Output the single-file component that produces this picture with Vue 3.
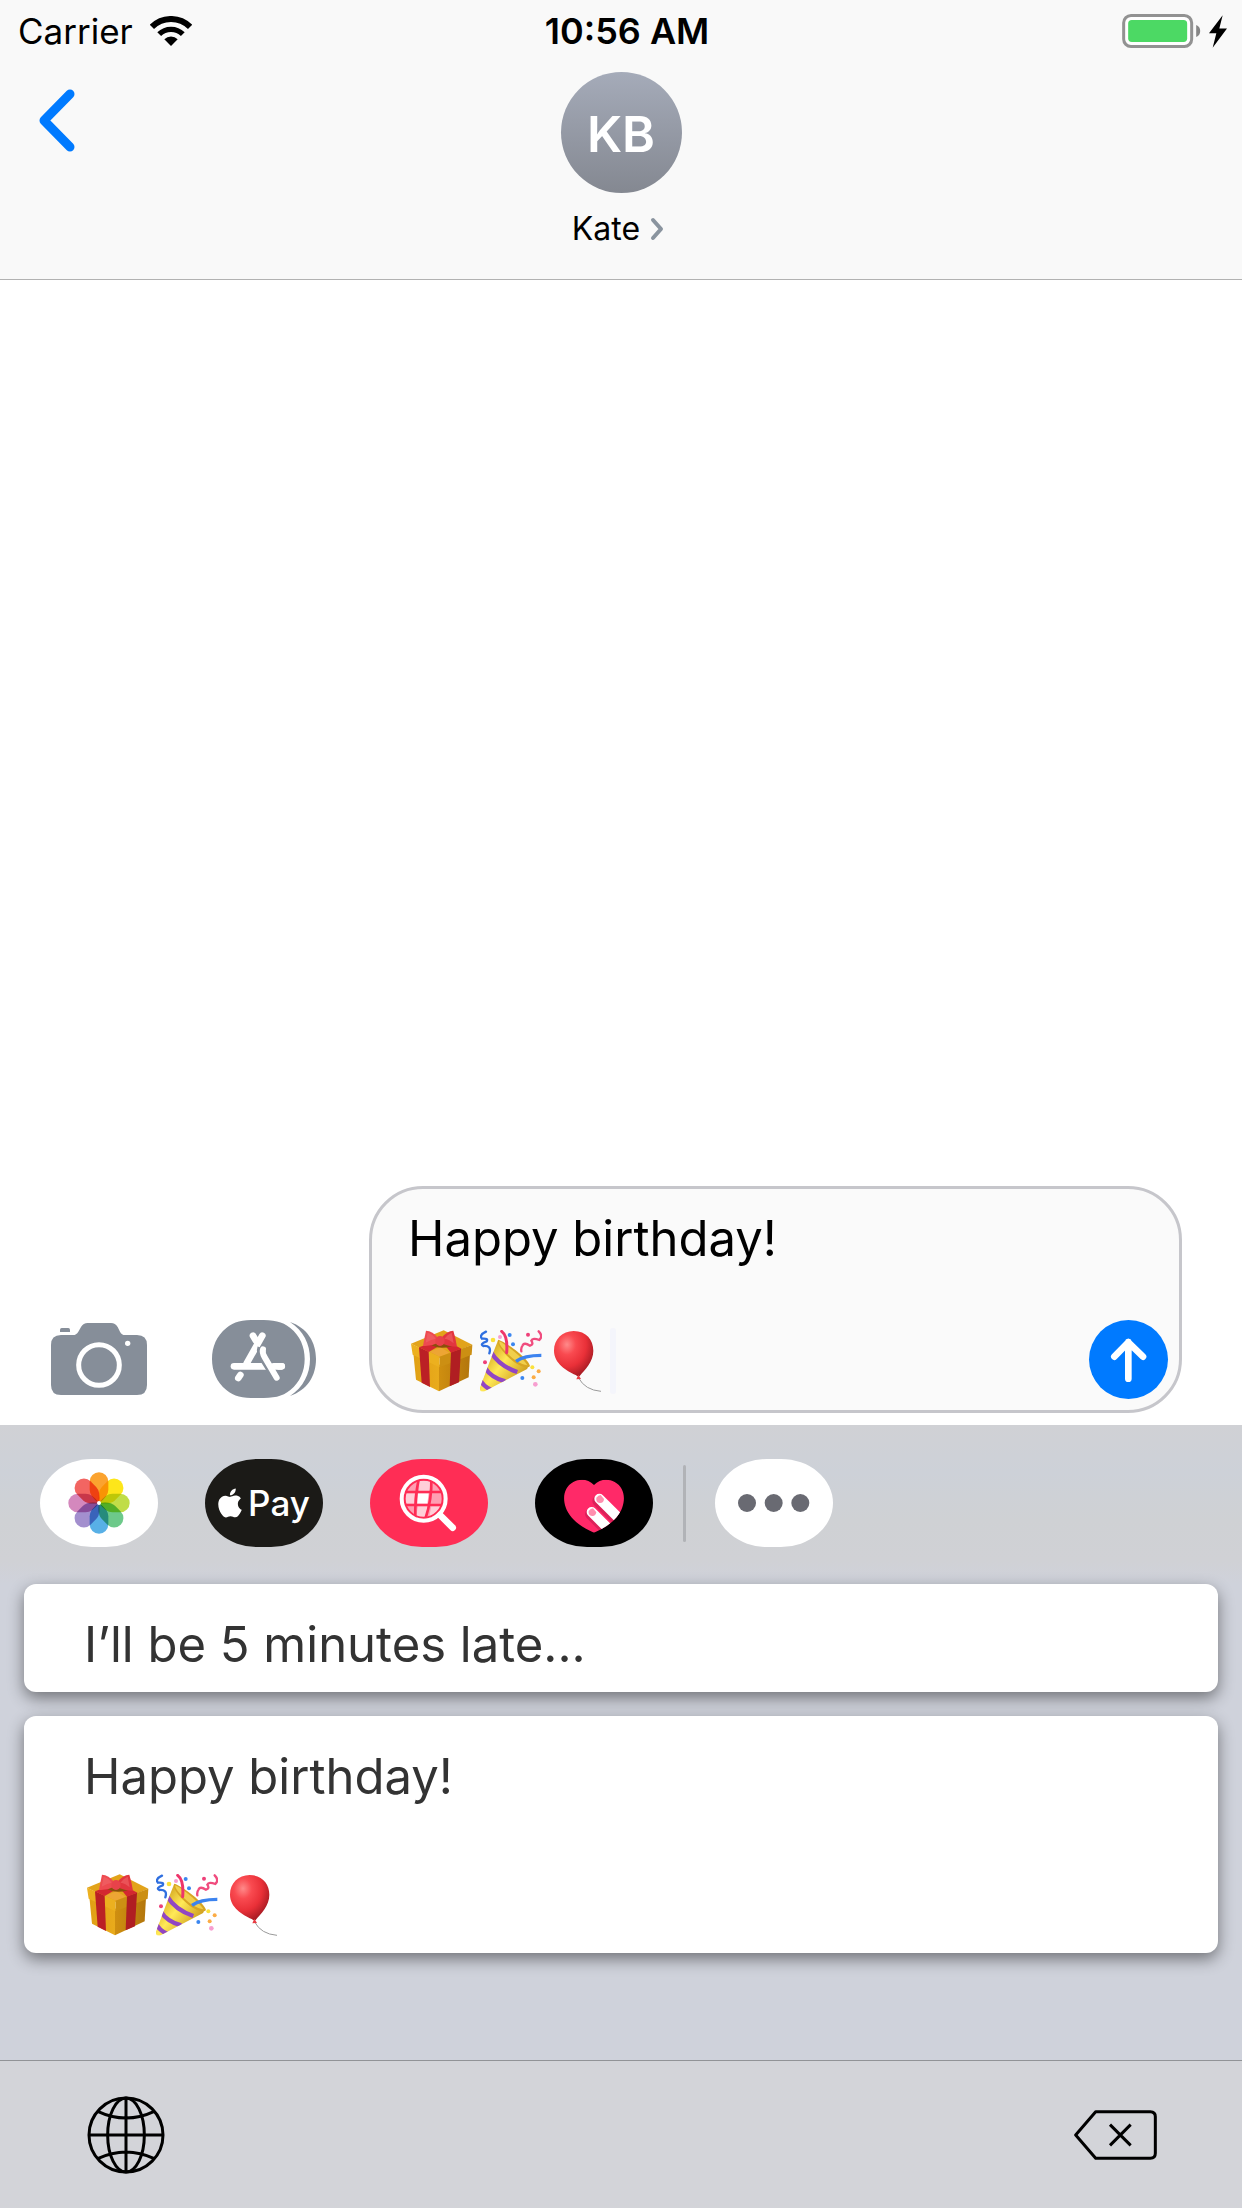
<script setup>
import { ref } from 'vue'

const draft = ref('Happy birthday!')
const phrases = [
  { text: 'I’ll be 5 minutes late...', emojis: [] },
  { text: 'Happy birthday!', emojis: ['gift', 'party', 'balloon'] },
]
const draftEmojis = ['gift', 'party', 'balloon']

const petals = ['#fba32f', '#fde61a', '#c0dd48', '#6dc98a', '#58b0e6', '#a38fce', '#d488bd', '#f26562']
</script>

<template>
  <div class="screen">
    <svg class="sprite" aria-hidden="true">
      <defs>
        <linearGradient id="boxL" x1="0" y1="0" x2="1" y2="0">
          <stop offset="0" stop-color="#e0a014" /><stop offset="1" stop-color="#e9ab1c" />
        </linearGradient>
        <linearGradient id="boxR" x1="0" y1="0" x2="1" y2="0">
          <stop offset="0" stop-color="#cf8f10" /><stop offset="1" stop-color="#b3760c" />
        </linearGradient>
        <linearGradient id="cone" x1="0" y1="0.3" x2="0.8" y2="0.9">
          <stop offset="0" stop-color="#c9920f" /><stop offset="0.45" stop-color="#ffe957" /><stop offset="1" stop-color="#c28b10" />
        </linearGradient>
        <radialGradient id="rubber" cx="0.33" cy="0.3" r="0.75">
          <stop offset="0" stop-color="#ff8a8a" /><stop offset="0.3" stop-color="#f94a50" />
          <stop offset="0.65" stop-color="#e93038" /><stop offset="1" stop-color="#a51a22" />
        </radialGradient>
        <clipPath id="coneClip"><path d="M55 29 Q42 60 0 172 Q-3 188 14 184 L140 118 Q150 108 132 92 Z" /></clipPath>
        <clipPath id="heartClip"><path d="M177 78 C160 60 135 58 115 69 C87 84 82 116 92 145 C103 178 138 205 177 221 C216 205 251 178 262 145 C272 116 267 84 239 69 C219 58 194 60 177 78 Z" /></clipPath>
      </defs>
      <symbol id="gift" viewBox="0 0 186 186">
        <path fill="url(#boxL)" d="M7 68 L84 104 V184 L15 149 Z" />
        <path fill="url(#boxR)" d="M84 104 L177 70 L173 142 L84 184 Z" />
        <path fill="#e2a31a" d="M0 41 L98 1 L184 44 L86 84 Z" />
        <path fill="#eda534" d="M55 65 L88 52 L116 68 L86 80 Z" />
        <path fill="#ecb01f" d="M0 41 L86 80 V112 L5 74 Z" />
        <path fill="#cc8f13" d="M86 80 L184 44 L182 74 L86 112 Z" />
        <path fill="#bb2025" d="M24 52 L53 65 L57 171 L32 158 Z" />
        <path fill="#b01e22" d="M120 67 L150 56 L144 157 L116 169 Z" />
        <path fill="#d32730" d="M24 52 L66 37 L85 47 L53 66 Z M103 47 L118 38 L151 56 L120 68 Z" />
        <path fill="#8b4f0b" d="M62 46 Q88 60 124 48 L112 36 H68 Z" />
        <path fill="#ee4a50" d="M82 25 Q65 2 45 2 Q40 24 36 48 Q58 50 82 38 Z" />
        <path fill="#e2363f" d="M90 25 Q108 2 127 2 Q134 24 138 50 Q112 50 90 38 Z" />
        <path fill="#f06a6b" d="M50 8 Q66 12 74 26 Q62 28 44 38 Z M122 8 Q108 14 100 26 Q116 28 128 40 Z" opacity="0.55" />
        <ellipse cx="87" cy="33" rx="14" ry="15" fill="#e8424a" />
      </symbol>
      <symbol id="party" viewBox="0 0 186 186">
        <g clip-path="url(#coneClip)">
          <path fill="url(#cone)" d="M50 25 H160 V186 H-5 Z" />
          <g fill="none" stroke="#9146c4" stroke-width="13">
            <path d="M34 68 Q58 108 112 126" />
            <path d="M14 112 Q34 144 76 154" />
            <path d="M0 148 Q8 168 34 180" />
          </g>
        </g>
        <path fill="#d7a523" d="M55 29 C78 36 148 88 150 108 C144 118 112 108 88 84 C64 62 48 38 55 29 Z" />
        <path fill="#f1cf4c" d="M58 34 C76 42 130 84 142 106 C122 104 100 88 84 72 C66 54 56 42 58 34 Z" />
        <g fill="none" stroke-linecap="round">
          <path stroke="#ee356b" stroke-width="9" d="M65 4 Q84 18 80 68" />
          <path stroke="#3c83ef" stroke-width="10" d="M108 94 Q132 76 184 76" stroke-linecap="butt" />
          <path stroke="#2f6fe0" stroke-width="7" d="M18 5 Q-4 16 6 26 Q26 24 20 34 Q-2 42 10 48 Q36 46 28 70" />
          <path stroke="#f04c7e" stroke-width="7" d="M176 4 Q190 18 178 30 Q158 22 154 32 Q162 44 150 47 Q132 36 128 46 Q122 54 124 64" />
        </g>
        <g fill="#3a86f0">
          <circle cx="89" cy="15" r="6" /><circle cx="99" cy="43" r="6" /><circle cx="127" cy="144" r="6" />
        </g>
        <g fill="#ee4079"><circle cx="144" cy="14" r="6" /><circle cx="15" cy="97" r="6" /></g>
        <g fill="#fbe13a"><circle cx="39" cy="30" r="7" /><circle cx="157" cy="112" r="6" /></g>
        <g fill="#f79fd0"><circle cx="60" cy="21" r="6" /><circle cx="166" cy="163" r="7" /></g>
        <g fill="#fbac45"><circle cx="176" cy="124" r="6" /><circle cx="161" cy="142" r="6" /></g>
      </symbol>
      <symbol id="balloon" viewBox="0 0 186 186">
        <path fill="none" stroke="#9a9a9a" stroke-width="3" d="M89 144 Q108 180 156 184" />
        <path fill="url(#rubber)" d="M74 3 C112 3 133 30 133 62 C133 96 108 118 92 138 Q86 140 80 135 C52 122 15 100 15 62 C15 28 40 3 74 3 Z" />
        <path fill="#e83b42" d="M88 134 L96 147 L82 148 Z" />
      </symbol>
    </svg>

    <header class="header">
      <div class="status">
        <div class="carrier">
          <span>Carrier</span>
          <svg class="wifi" viewBox="0 0 126 90" aria-label="Wi-Fi">
            <g fill="none" stroke="#000">
              <path stroke-width="18" d="M5.700 32.700 A81 81 0 0 1 120.300 32.700" />
              <path stroke-width="16" d="M27.600 54.600 A50 50 0 0 1 98.400 54.600" />
            </g>
            <path d="M43 70 A28 28 0 0 1 83 70 L63 90 Z" />
          </svg>
        </div>
        <time class="clock">10:56 AM</time>
        <div class="power">
          <svg class="battery" viewBox="0 0 236 102" aria-label="Battery charging">
            <rect x="4.500" y="4.500" width="204" height="93" rx="22" fill="#fff" stroke="#929292" stroke-width="9" />
            <rect x="18" y="18" width="177" height="66" rx="11" fill="#4cd964" />
            <path fill="#868686" d="M222 33 Q234 38 234 51 Q234 64 222 69 Z" />
          </svg>
          <svg class="bolt" viewBox="0 0 54 98" aria-hidden="true">
            <path d="M41 0 L0 54 H22 L11 98 L54 40 H31 Z" />
          </svg>
        </div>
      </div>

      <div class="nav">
        <button class="back" type="button" aria-label="Back">
          <svg viewBox="0 0 37 63" aria-hidden="true">
            <path d="M32 5 L6 31.500 L32 58" fill="none" stroke="#007aff" stroke-width="9" stroke-linecap="round" stroke-linejoin="round" />
          </svg>
        </button>
        <button class="contact" type="button">
          <span class="avatar">KB</span>
          <span class="name">
            Kate
            <svg viewBox="0 0 14 24" aria-hidden="true">
              <path d="M3 3 L11 12 L3 21" fill="none" stroke="#8a949f" stroke-width="4" stroke-linecap="round" stroke-linejoin="round" />
            </svg>
          </span>
        </button>
      </div>
    </header>

    <main class="thread"></main>

    <form class="composer" @submit.prevent>
      <button class="tool camera" type="button" aria-label="Camera">
        <svg viewBox="0 0 288 216" aria-hidden="true">
          <path fill="#868e99" d="M30 36 H66 Q76 36 82 26 L90 12 Q97 0 110 0 H180 Q193 0 200 12 L207 26 Q212 36 222 36 H258 Q288 36 288 66 V186 Q288 216 258 216 H30 Q0 216 0 186 V66 Q0 36 30 36 Z" />
          <path fill="#868e99" d="M27 27 V20 Q27 15 32 15 H52 Q57 15 57 20 V27 Z" />
          <circle cx="144" cy="126" r="61" fill="none" stroke="#fff" stroke-width="15" />
          <circle cx="230" cy="61" r="8" fill="#fff" />
        </svg>
      </button>
      <button class="tool store" type="button" aria-label="Apps">
        <svg viewBox="0 0 312 234" aria-hidden="true">
          <path fill="#868e99" d="M139 0 C185 0 210 3 235 24 C264 48 278 80 278 117 C278 154 264 186 235 210 C210 231 185 234 139 234 C93 234 68 231 43 210 C14 186 0 154 0 117 C0 80 14 48 43 24 C68 3 93 0 139 0 Z" />
          <path fill="#868e99" d="M234 6 C286 24 312 66 312 117 C312 168 286 210 234 228 C274 202 294 162 294 117 C294 72 274 32 234 6 Z" />
          <g fill="none" stroke="#fff" stroke-width="20" stroke-linecap="round">
            <path d="M151 47 L104 130" />
            <path d="M123 47 L132 62" />
            <path d="M66 139 H209" />
            <path d="M85 165 L79 174" />
          </g>
          <path d="M151 84 Q147 96 156 112 L195 174" fill="none" stroke="#868e99" stroke-width="30" />
          <path d="M153 88 Q150 98 158 112 L194 173" fill="none" stroke="#fff" stroke-width="18" stroke-linecap="round" />
          <path d="M185 139 H209" stroke="#fff" stroke-width="20" stroke-linecap="round" />
        </svg>
      </button>
      <div class="field">
        <div class="field-body">
          <textarea v-model="draft" rows="1" aria-label="Message"></textarea>
          <div class="emojis">
            <svg v-for="name in draftEmojis" :key="name" role="img" :aria-label="name"><use :href="'#' + name" /></svg>
            <span class="caret"></span>
          </div>
        </div>
        <button class="send" type="submit" aria-label="Send">
          <svg viewBox="0 0 237 237" aria-hidden="true">
            <path d="M118 176 V66 M76 110 L118 67 L162 110" fill="none" stroke="#fff" stroke-width="20" stroke-linecap="round" stroke-linejoin="round" />
          </svg>
        </button>
      </div>
    </form>

    <section class="keyboard">
      <nav class="apps">
        <button class="app white" type="button" aria-label="Photos">
          <svg class="flower" viewBox="0 0 354 264" aria-hidden="true">
            <g transform="translate(177 132)">
              <path
                v-for="(color, i) in petals"
                :key="color"
                class="petal"
                :fill="color"
                :transform="`rotate(${i * 45})`"
                d="M0 0 Q-28 -20 -28 -40 V-64 A28 28 0 0 1 28 -64 V-40 Q28 -20 0 0 Z"
              />
              <circle r="6" fill="#fff" />
            </g>
          </svg>
        </button>
        <button class="app pay" type="button">
          <svg class="apple" viewBox="2 0 20 24" aria-label="Apple">
            <path fill="#fff" d="M12.152 6.896c-.948 0-2.415-1.078-3.96-1.040-2.040.027-3.910 1.183-4.961 3.014-2.117 3.675-.546 9.103 1.519 12.090 1.013 1.454 2.208 3.090 3.792 3.039 1.520-.065 2.090-.987 3.935-.987 1.831 0 2.350.987 3.960.948 1.637-.026 2.676-1.480 3.676-2.948 1.156-1.688 1.636-3.325 1.662-3.415-.039-.013-3.182-1.221-3.220-4.857-.026-3.040 2.480-4.494 2.597-4.559-1.429-2.090-3.623-2.324-4.390-2.376-2-.156-3.675 1.090-4.610 1.090zM15.530 3.830c.843-1.012 1.400-2.427 1.245-3.830-1.207.052-2.662.805-3.532 1.818-.780.896-1.454 2.338-1.273 3.714 1.338.104 2.715-.688 3.559-1.701" />
          </svg>
          <span>Pay</span>
        </button>
        <button class="app images" type="button" aria-label="Images">
          <svg viewBox="0 0 354 264" aria-hidden="true">
            <circle cx="161" cy="119" r="60" fill="#ff9fb2" />
            <path fill="#ffcfd8" d="M148 66 L182 64 L178 98 H147 Z M104 103 H134 L132 134 H104 Z M144 142 H174 L166 178 L138 172 Z M184 142 H214 L200 162 L178 172 Z" />
            <path fill="#fff" d="M144 103 H176 L172 134 H142 Z" />
            <g fill="none" stroke="#ff2d55" stroke-width="8">
              <path d="M104 99 H220 M102 138 H220" />
              <path d="M146 60 Q134 120 136 180 M184 62 Q186 120 166 180" />
              <circle cx="161" cy="119" r="57" stroke-width="6" />
            </g>
            <circle cx="161" cy="119" r="66" fill="none" stroke="#fff" stroke-width="12" />
            <path d="M210 168 L248 206" stroke="#fff" stroke-width="20" stroke-linecap="round" />
          </svg>
        </button>
        <button class="app touch" type="button" aria-label="Digital Touch">
          <svg viewBox="0 0 354 264" aria-hidden="true">
            <g clip-path="url(#heartClip)">
              <rect width="354" height="264" fill="#ff2968" />
              <g stroke-linecap="round" fill="none">
                <path d="M189 126 L268 205 M167 165 L240 238" stroke="#c41c50" stroke-width="34" opacity="0.6" />
                <path d="M193 119 L272 198 M170 159 L244 233" stroke="#fff" stroke-width="30" />
              </g>
              <g fill="#ff8fae">
                <path d="M184 116 Q190 108 197 108 L207 120 Q206 133 194 132 Q182 130 184 116 Z" />
                <path d="M161 156 Q167 148 174 148 L184 160 Q182 172 171 171 Q159 169 161 156 Z" />
              </g>
            </g>
          </svg>
        </button>
        <span class="divider"></span>
        <button class="app white" type="button" aria-label="More">
          <svg viewBox="0 0 354 264" aria-hidden="true">
            <g fill="#696a72"><circle cx="96" cy="132" r="27" /><circle cx="176" cy="132" r="27" /><circle cx="256" cy="132" r="27" /></g>
          </svg>
        </button>
      </nav>

      <div class="phrases">
        <button v-for="phrase in phrases" :key="phrase.text" class="phrase" type="button">
          <span>{{ phrase.text }}</span>
          <span v-if="phrase.emojis.length" class="emojis">
            <svg v-for="name in phrase.emojis" :key="name" role="img" :aria-label="name"><use :href="'#' + name" /></svg>
          </span>
        </button>
      </div>

      <footer class="bar">
        <button class="key globe" type="button" aria-label="Next keyboard">
          <svg viewBox="0 0 234 234" aria-hidden="true">
            <g fill="none" stroke="#000" stroke-width="9">
              <circle cx="117" cy="117" r="111" />
              <ellipse cx="117" cy="117" rx="55" ry="111" />
              <path d="M117 4 V230 M6 117 H228 M32 46 Q117 86 202 46 M32 188 Q117 148 202 188" />
            </g>
          </svg>
        </button>
        <button class="key delete" type="button" aria-label="Delete">
          <svg viewBox="0 0 249 150" aria-hidden="true">
            <g fill="none" stroke="#000" stroke-width="9">
              <path stroke-linejoin="round" d="M65 5 H229 Q244 5 244 20 V130 Q244 145 229 145 H65 L5 75 Z" />
              <path d="M108 44 L170 106 M170 44 L108 106" />
            </g>
          </svg>
        </button>
      </footer>
    </section>
  </div>
</template>

<style>
body {
  margin: 0;
}
</style>

<style scoped>
.screen {
  display: flex;
  flex-direction: column;
  min-height: 100vh;
  background: #fff;
  color: #000;
  font-family: Inter, "Liberation Sans", sans-serif;
}
.sprite {
  position: absolute;
  width: 0;
  height: 0;
}
svg {
  display: block;
  flex: none;
}
button {
  padding: 0;
  border: 0;
  background: none;
  color: inherit;
  font: inherit;
}

.header {
  background: #f9f9f9;
  border-bottom: 1px solid #b2b2b2;
}
.status {
  display: grid;
  grid-template-columns: 1fr auto 1fr;
  align-items: center;
  height: 62px;
  padding: 0 6px 0 18px;
  font-size: 35px;
  line-height: 62px;
}
.carrier {
  display: flex;
  align-items: center;
  gap: 17px;
}
.wifi {
  width: 42px;
  height: 30px;
}
.clock {
  font-size: 36px;
  font-weight: 600;
}
.power {
  display: flex;
  align-items: center;
  justify-content: flex-end;
  gap: 8px;
  padding-right: 9px;
}
.battery {
  width: 79px;
  height: 34px;
}
.bolt {
  width: 18px;
  height: 33px;
}
.nav {
  display: grid;
  grid-template-columns: 1fr auto 1fr;
  align-items: start;
  padding: 10px 38px 30px;
}
.back {
  justify-self: start;
  margin-top: 17px;
}
.back svg {
  width: 37px;
  height: 63px;
}
.contact {
  display: flex;
  flex-direction: column;
  align-items: center;
  gap: 16px;
}
.avatar {
  width: 121px;
  height: 121px;
  border-radius: 50%;
  background: linear-gradient(#a5abb9, #848891);
  color: #fff;
  font-size: 50px;
  font-weight: 600;
  line-height: 124px;
  text-align: center;
}
.name {
  display: flex;
  align-items: center;
  gap: 10px;
  padding-right: 6px;
  font-size: 32px;
  line-height: 40px;
}
.name svg {
  width: 14px;
  height: 24px;
}

.thread {
  flex: 1;
}

.composer {
  display: flex;
  align-items: flex-end;
  padding: 0 60px 12px 51px;
}
.tool {
  display: flex;
  align-items: center;
  height: 80px;
  margin-bottom: 14px;
}
.camera {
  margin-right: 65px;
}
.camera svg {
  width: 96px;
  height: 72px;
}
.store {
  margin-right: 53px;
}
.store svg {
  width: 104px;
  height: 78px;
}
.field {
  display: flex;
  flex: 1;
  align-items: flex-end;
  padding: 0 11px 11px 36px;
  border: 3px solid #c6c6cb;
  border-radius: 54px;
  background: #fafafa;
}
.field-body {
  flex: 1;
  padding: 20px 0 7px;
}
textarea {
  display: block;
  width: 100%;
  height: 60px;
  margin: 0 0 61px;
  padding: 0;
  border: 0;
  outline: 0;
  background: none;
  color: #000;
  font: inherit;
  font-size: 49px;
  line-height: 60px;
  resize: none;
  overflow: hidden;
}
.emojis {
  display: flex;
  align-items: center;
  gap: 7px;
  padding-left: 3px;
}
.emojis svg {
  width: 62px;
  height: 62px;
}
.caret {
  width: 6px;
  height: 66px;
  margin: -2px 0 -2px -8px;
  border-radius: 3px;
  background: #f4f5fb;
}
.send {
  width: 79px;
  height: 79px;
  border-radius: 50%;
  background: #007aff;
}
.send svg {
  width: 79px;
  height: 79px;
}

.keyboard {
  background: #cfd2db;
}
.apps {
  display: flex;
  align-items: center;
  gap: 47px;
  padding: 34px 40px 37px;
  background: linear-gradient(#d0d1d5, #cdd1d8 30%, #cfd1d4 60%, #d0d1d5 85%, #cfd2db);
}
.app {
  display: flex;
  align-items: center;
  justify-content: center;
  width: 118px;
  height: 88px;
  border-radius: 52px / 44px;
  color: #fff;
}
.app svg {
  width: 118px;
  height: 88px;
}
.white {
  background: #fff;
}
.flower {
  isolation: isolate;
}
.petal {
  mix-blend-mode: multiply;
}
.pay {
  gap: 6px;
  background: #1b1a17;
  font-size: 35px;
  font-weight: 500;
  line-height: 44px;
}
.pay .apple {
  width: 24px;
  height: 30px;
}
.images {
  background: #ff2d55;
}
.touch {
  background: #000;
}
.divider {
  width: 3px;
  height: 77px;
  margin: 0 -18px 0 -17px;
  border-radius: 2px;
  background: #b1b3b7;
}
.phrases {
  display: flex;
  flex-direction: column;
  gap: 24px;
  padding: 0 24px 107px;
}
.phrase {
  display: flex;
  flex-direction: column;
  gap: 67px;
  padding: 31px 60px 17px;
  border-radius: 12px;
  background: #fff;
  box-shadow: 0 6px 16px rgba(0, 0, 0, 0.45);
  color: #333;
  font-size: 49px;
  line-height: 60px;
  text-align: left;
}
.bar {
  display: flex;
  align-items: center;
  justify-content: space-between;
  height: 147px;
  padding: 0 85px 0 87px;
  border-top: 1px solid #919397;
  background: #d3d4d9;
}
.globe svg {
  width: 78px;
  height: 78px;
}
.delete svg {
  width: 83px;
  height: 50px;
}
</style>
